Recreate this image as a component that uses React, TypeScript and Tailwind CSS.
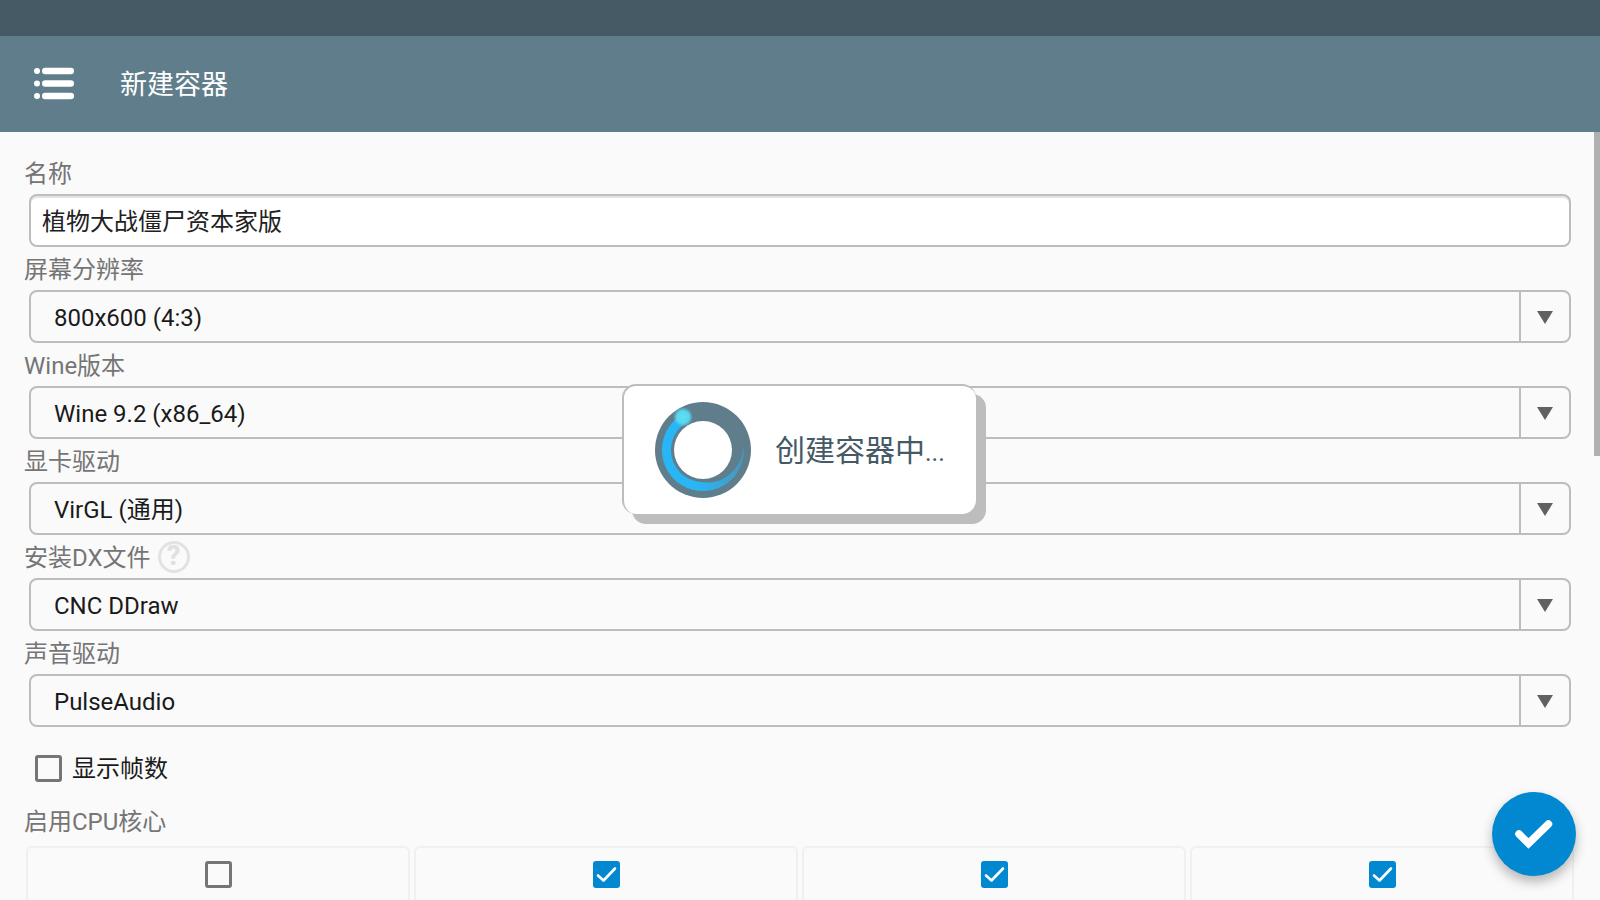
const font = { sans: "font-['Roboto','Noto_Sans_CJK_SC',sans-serif]" };

function MenuIcon() {
  return (
    <svg width="42" height="34" viewBox="0 0 42 34" className="block">
      {[4, 16.5, 29].map((y) => (
        <g key={y} fill="#ffffff">
          <circle cx="4" cy={y} r="3" />
          <rect x="9" y={y - 3.2} width="32" height="6.4" rx="3.2" />
        </g>
      ))}
    </svg>
  );
}

function Label({ text, help }: { text: string; help?: boolean }) {
  return (
    <div className="flex h-[43px] items-center pl-[24px] pt-[2px] text-[24px] leading-none text-[#757575]">
      <span>{text}</span>
      {help && (
        <span className="-mt-[2px] ml-[7px] flex h-[32px] w-[32px] items-center justify-center rounded-full border-[3px] border-[#e2e2e2] text-[27px] font-extrabold text-[#e0e0e0]">
          ?
        </span>
      )}
    </div>
  );
}

function Select({ label, value, help }: { label: string; value: string; help?: boolean }) {
  return (
    <div className="h-[96px]">
      <Label text={label} help={help} />
      <div className="ml-[29px] mr-[29px] flex h-[53px] items-stretch rounded-[8px] border-2 border-[#bdbdbd]">
        <div className="flex flex-1 items-center pl-[23px] pt-[2px] text-[24px] text-[#1a1a1a]">{value}</div>
        <div className="flex w-[50px] items-center justify-center border-l-2 border-[#bdbdbd] pt-[2px]">
          <svg width="16" height="13" viewBox="0 0 16 13">
            <path d="M0 0H16L8 13Z" fill="#616161" />
          </svg>
        </div>
      </div>
    </div>
  );
}

function Box({ checked }: { checked?: boolean }) {
  if (checked) {
    return (
      <span className="flex h-[27px] w-[27px] items-center justify-center rounded-[3px] bg-[#0288d1]">
        <svg width="21" height="17" viewBox="0 0 21 17" fill="none">
          <path d="M2 9.5L7.5 14.5L19 2.5" stroke="#ffffff" strokeWidth="2.6" strokeLinecap="round" strokeLinejoin="round" />
        </svg>
      </span>
    );
  }
  return <span className="block h-[27px] w-[27px] rounded-[3px] border-[3px] border-[#757575]" />;
}

function CoreCard({ checked }: { checked?: boolean }) {
  return (
    <div className="flex h-[60px] w-[384px] justify-center rounded-t-[6px] border-2 border-b-0 border-[#f0f0f0] pt-[13px]">
      <Box checked={checked} />
    </div>
  );
}

// arc is split into short pieces so it can fade and taper towards the tail
function Spinner() {
  const pieces = Array.from({ length: 60 }, (_, i) => {
    const t = i / 60;
    const start = 121 + t * 240;
    const end = start + 5;
    const width = t < 0.6 ? 9 : 9 - ((t - 0.6) / 0.4) * 8;
    const r = 41 - width / 2;
    const toXY = (a: number) => [50 + r * Math.cos((a * Math.PI) / 180), 50 - r * Math.sin((a * Math.PI) / 180)];
    const [x1, y1] = toXY(start);
    const [x2, y2] = toXY(end);
    const opacity = t < 0.55 ? 1 : 1 - ((t - 0.55) / 0.45) * 0.75;
    return { d: `M${x1} ${y1}A${r} ${r} 0 0 0 ${x2} ${y2}`, width, opacity, key: i };
  });
  return (
    <svg width="96" height="96" viewBox="2 2 96 96" className="block shrink-0">
      <defs>
        <radialGradient id="glow">
          <stop offset="0%" stopColor="#62dff3" />
          <stop offset="60%" stopColor="#58d6ef" />
          <stop offset="100%" stopColor="#58d6ef" stopOpacity="0" />
        </radialGradient>
      </defs>
      <circle cx="50" cy="50" r="48" fill="#607d8b" />
      {pieces.map((p) => (
        <path key={p.key} d={p.d} fill="none" stroke="#29b6f6" strokeWidth={p.width} opacity={p.opacity} />
      ))}
      <circle cx="50" cy="50" r="29" fill="#ffffff" />
      <circle cx="30" cy="17" r="10" fill="url(#glow)" />
    </svg>
  );
}

export default function App() {
  return (
    <div className={`relative h-[900px] w-[1600px] overflow-hidden bg-[#fafafa] ${font.sans}`}>
      <div className="h-[36px] bg-[#455a64]" />
      <header className="flex h-[96px] items-center bg-[#607d8b] pl-[33px]">
        <MenuIcon />
        <h1 className="ml-[45px] pt-[3px] text-[27px] font-normal text-white">新建容器</h1>
      </header>

      <main className="pt-[19px]">
        <div className="h-[96px]">
          <Label text="名称" />
          <div className="mx-[29px] flex h-[53px] items-center rounded-[8px] border-2 border-[#bdbdbd] bg-white pl-[11px] pt-[2px] text-[24px] text-[#212121] shadow-[inset_0_2px_0_#e4e4e4]">
            植物大战僵尸资本家版
          </div>
        </div>
        <Select label="屏幕分辨率" value="800x600 (4:3)" />
        <Select label="Wine版本" value="Wine 9.2 (x86_64)" />
        <Select label="显卡驱动" value="VirGL (通用)" />
        <Select label="安装DX文件" value="CNC DDraw" help />
        <Select label="声音驱动" value="PulseAudio" />

        <div className="mt-[24px] flex h-[34px] items-center pl-[35px] text-[24px] text-[#1a1a1a]">
          <Box />
          <span className="ml-[10px] pt-[2px]">显示帧数</span>
        </div>
        <div className="mt-[15px] flex h-[38px] items-end pl-[24px] text-[24px] leading-[32px] text-[#757575]">启用CPU核心</div>
        <div className="mt-[8px] flex gap-[4px] pl-[26px]">
          <CoreCard />
          <CoreCard checked />
          <CoreCard checked />
          <CoreCard checked />
        </div>
      </main>

      {/* scrollbar */}
      <div className="absolute right-0 top-[132px] h-[324px] w-[6px] bg-[#b0b0b0]" />

      {/* progress dialog */}
      <div className="absolute left-[622px] top-[384px] flex h-[130px] w-[354px] items-center rounded-[14px] border-2 border-[#bdbdbd] border-r-0 border-b-0 bg-white pl-[31px] shadow-[10px_10px_0_#bdbdbd]">
        <Spinner />
        <span className="ml-[24px] text-[30px] text-[#455a64]">
          创建容器中<span className="text-[25px]">...</span>
        </span>
      </div>

      <button className="absolute left-[1492px] top-[792px] flex h-[84px] w-[84px] items-center justify-center rounded-full bg-[#0288d1] shadow-[0_6px_12px_rgba(0,0,0,0.28)]">
        <svg width="38" height="30" viewBox="0 0 38 30" fill="none">
          <path d="M4 15L13.5 24.5L33.5 5" stroke="#ffffff" strokeWidth="7.5" strokeLinecap="round" strokeLinejoin="miter" />
        </svg>
      </button>
    </div>
  );
}
